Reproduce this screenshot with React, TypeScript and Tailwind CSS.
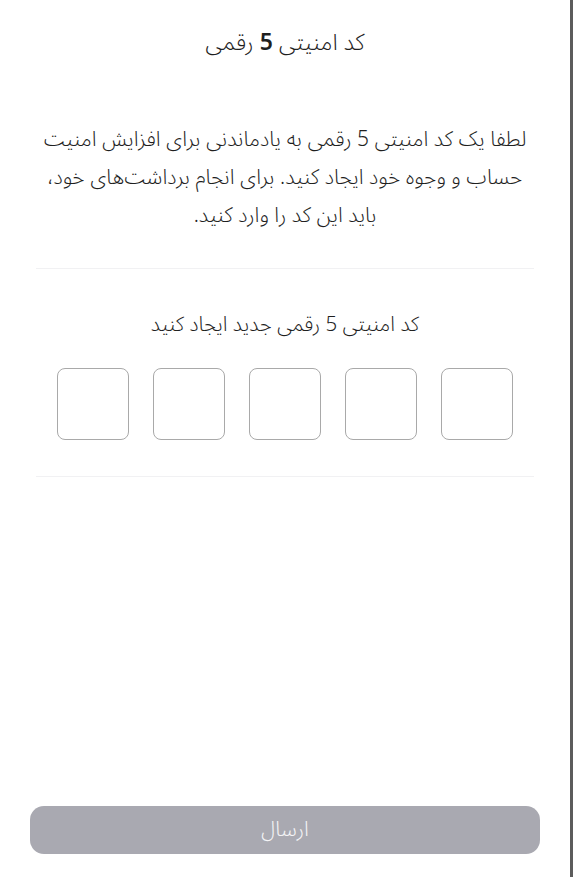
import React from 'react';

const DIGITS = [0, 1, 2, 3, 4];

const SecurityCodeSheet = () => {
  return (
    <div
      dir="rtl"
      className="flex h-full w-[570px] flex-col bg-white font-light text-[#1f1f1f]"
      style={{ fontFamily: '"Noto Sans Arabic", "Noto Sans", "DejaVu Sans", sans-serif' }}
    >
      <div className="flex h-[86px] items-center justify-center">
        <h1 className="text-[23px] font-light">
          کد امنیتی <span className="font-semibold">5</span> رقمی
        </h1>
      </div>

      <div className="mx-[36px] mt-[34px] border-b border-[#f1f1f3] pb-[34px]">
        <p className="text-center text-[21px] leading-[38px]">
          لطفا یک کد امنیتی 5 رقمی به یادماندنی برای افزایش امنیت حساب و وجوه خود ایجاد کنید. برای انجام برداشت‌های خود، باید این کد را وارد کنید.
        </p>
      </div>

      <div className="mx-[36px] border-b border-[#f1f1f3] pt-[42px] pb-[36px]">
        <p className="text-center text-[20.5px] leading-[28px]">کد امنیتی 5 رقمی جدید ایجاد کنید</p>
        <div className="mt-[29px] flex justify-center gap-[24px]" dir="ltr">
          {DIGITS.map((i) => (
            <input
              key={i}
              type="text"
              inputMode="numeric"
              maxLength={1}
              className="h-[72px] w-[72px] rounded-[8px] border-[1.5px] border-[#a9a9a9] bg-white text-center text-[24px] outline-none"
            />
          ))}
        </div>
      </div>

      <div className="flex-1" />

      <div className="px-[30px] pb-[23px]">
        <button
          type="button"
          disabled
          className="flex h-[48px] w-full items-center justify-center rounded-[14px] bg-[#a9a9b1] text-[21px] text-[#f4f4f6]"
        >
          ارسال
        </button>
      </div>
    </div>
  );
};

export default function App() {
  return (
    <div className="flex h-screen w-full overflow-hidden bg-[#5c5c5c]">
      <SecurityCodeSheet />
    </div>
  );
}
